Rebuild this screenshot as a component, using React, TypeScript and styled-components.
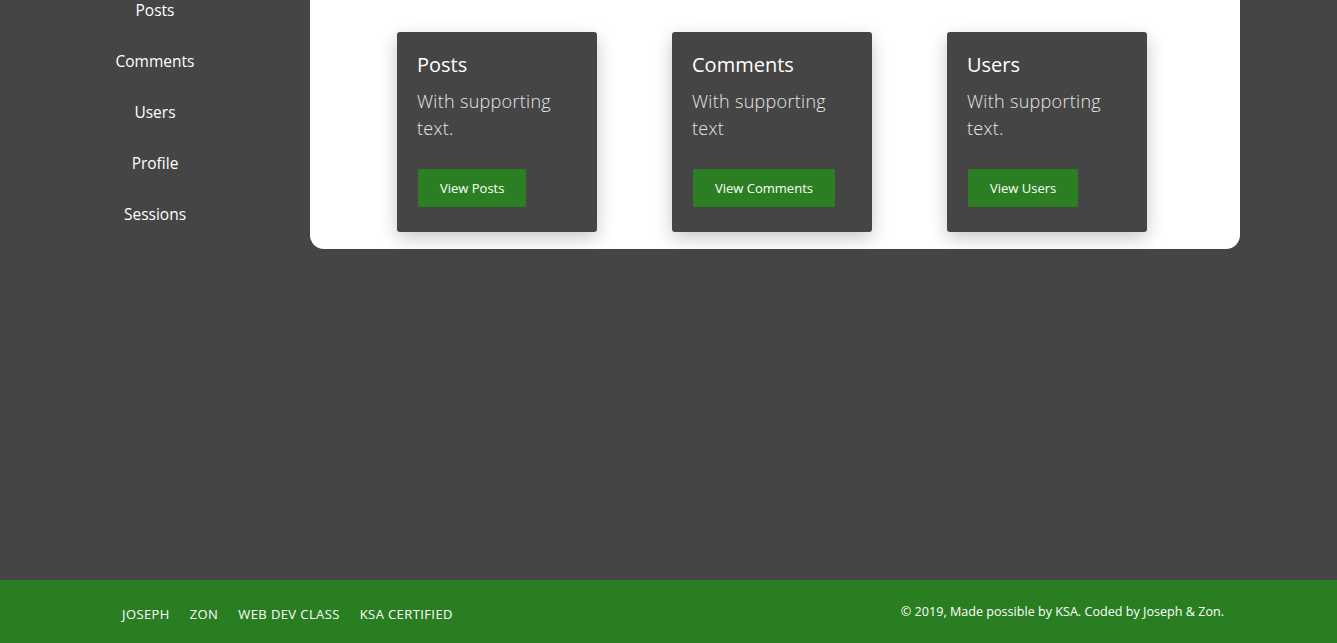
import React from "react";
import styled, { createGlobalStyle } from "styled-components";

const Global = createGlobalStyle`
  html, body { margin: 0; padding: 0; background: #454545; }
  body { font-family: "Open Sans", "DejaVu Sans", sans-serif; color: #fff; }
  * { box-sizing: border-box; }
`;

const Page = styled.div`
  display: flex;
  flex-direction: column;
  height: 643px;
  overflow: hidden;
`;

const Body = styled.div`
  flex: 1;
  display: flex;
  align-items: flex-start;
`;

const Sidebar = styled.nav`
  width: 310px;
  display: flex;
  flex-direction: column;
  margin-top: -15px;
`;

const NavItem = styled.a`
  display: block;
  text-align: center;
  font-size: 15.5px;
  line-height: 21px;
  padding: 15px 0;
  color: #fff;
  text-decoration: none;
`;

const Panel = styled.main`
  width: 930px;
  background: #fff;
  border-radius: 0 0 14px 14px;
  padding: 32px 0 17px 87px;
  display: flex;
  gap: 75px;
`;

const Card = styled.div`
  width: 200px;
  height: 200px;
  background: #454545;
  border-radius: 3px;
  box-shadow: 0 6px 18px rgba(0, 0, 0, 0.22);
  padding: 21px 20px 0 20px;
  display: flex;
  flex-direction: column;
`;

const CardTitle = styled.h3`
  margin: 0;
  font-size: 20px;
  font-weight: 400;
  line-height: 24px;
  color: #fff;
`;

const CardText = styled.p`
  margin: 11px 0 0 0;
  font-size: 18px;
  letter-spacing: 0.3px;
  font-weight: 300;
  line-height: 27px;
  color: #e6e6e6;
  height: 54px;
`;

const Button = styled.button`
  align-self: flex-start;
  margin: 27px 0 0 1px;
  height: 38px;
  padding: 0 22px;
  background: #2b7f22;
  border: none;
  border-radius: 2px;
  color: #fff;
  font-family: inherit;
  font-size: 13px;
  cursor: pointer;
`;

const Footer = styled.footer`
  height: 63px;
  background: #2a7e22;
  display: flex;
  align-items: center;
  justify-content: space-between;
  padding: 0 113px 0 122px;
`;

const FooterLinks = styled.div`
  display: flex;
  gap: 20px;
  margin-top: 4px;
`;

const FooterLink = styled.a`
  color: #fff;
  font-size: 13px;
  letter-spacing: 0.4px;
  text-transform: uppercase;
  text-decoration: none;
`;

const Copy = styled.div`
  font-size: 12.6px;
  color: #fff;
`;

const cards = [
  { title: "Posts", text: "With supporting text.", btn: "View Posts" },
  { title: "Comments", text: "With supporting text", btn: "View Comments" },
  { title: "Users", text: "With supporting text.", btn: "View Users" },
];

export default function App() {
  return (
    <>
      <Global />
      <Page>
        <Body>
          <Sidebar>
            {["Posts", "Comments", "Users", "Profile", "Sessions"].map((n) => (
              <NavItem key={n} href="#">{n}</NavItem>
            ))}
          </Sidebar>
          <Panel>
            {cards.map((c) => (
              <Card key={c.title}>
                <CardTitle>{c.title}</CardTitle>
                <CardText>{c.text}</CardText>
                <Button>{c.btn}</Button>
              </Card>
            ))}
          </Panel>
        </Body>
        <Footer>
          <FooterLinks>
            {["Joseph", "Zon", "Web Dev Class", "KSA Certified"].map((l) => (
              <FooterLink key={l} href="#">{l}</FooterLink>
            ))}
          </FooterLinks>
          <Copy>© 2019, Made possible by KSA. Coded by Joseph &amp; Zon.</Copy>
        </Footer>
      </Page>
    </>
  );
}
